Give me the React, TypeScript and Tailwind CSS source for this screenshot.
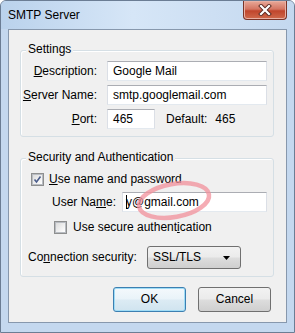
import React from 'react';

const font = { fontFamily: '"Liberation Sans", Arial, sans-serif' };

const btn =
  'h-[25px] w-[73px] rounded-[3px] border border-[#707070] bg-[linear-gradient(#f2f2f2,#ebebeb_48%,#dddddd_52%,#cfcfcf)] text-[12px] text-black';

const Checkbox = ({ checked }: { checked?: boolean }) => (
  <span className="flex h-[13px] w-[13px] shrink-0 items-center justify-center border border-[#8e8f8f] bg-white">
    <span className="flex h-[11px] w-[11px] items-center justify-center border border-[#b8bcc2] bg-[linear-gradient(135deg,#dcdcdc,#ffffff)]">
      {checked && (
        <svg width="9" height="9" viewBox="0 0 9 9">
          <path d="M1.5 4.5 L3.5 7 L7.5 1.5" fill="none" stroke="#4a5d8c" strokeWidth="1.6" />
        </svg>
      )}
    </span>
  </span>
);

const TextBox = ({ children, className = '' }: { children: React.ReactNode; className?: string }) => (
  <div
    className={`flex h-[20px] items-center border border-[#dbdfe6] border-t-[#abadb3] border-b-[#e3e9ef] bg-white pl-[5px] ${className}`}
  >
    {children}
  </div>
);

const Group = ({ title, children }: { title: string; children: React.ReactNode }) => (
  <div className="relative ml-[11px] mr-[12px] rounded-[3px] border border-[#d5dfe5] shadow-[inset_1px_1px_0_#ffffff]">
    <span className="absolute -top-[9px] left-[5px] bg-[#f0f0f0] px-[2px] leading-[15px]">{title}</span>
    {children}
  </div>
);

export default function App() {
  return (
    <div
      className="relative flex h-[333px] w-[295px] flex-col overflow-hidden rounded-t-[6px] border border-[#6b7d94] bg-[#c4d8ef] text-[12px] leading-[15px] text-black"
      style={font}
    >
      {/* Title bar */}
      <div className="flex h-[28px] shrink-0 justify-between bg-[linear-gradient(90deg,#bad2ec,#d6e6f7_45%,#c4d8ef)]">
        <span className="pl-[7px] pt-[7px] text-[12px]">SMTP Server</span>
        <div className="mr-[7px] flex h-[19px] w-[44px] items-center justify-center rounded-b-[4px] border border-t-0 border-[#7a3428] bg-[linear-gradient(#e9a999,#d47562_45%,#c0452c_55%,#cf6a4c)] shadow-[inset_0_0_0_1px_#e8b0a4]">
          <svg width="14" height="12" viewBox="0 0 14 12">
            <path d="M3 2 L11 10 M11 2 L3 10" stroke="#5b2a22" strokeWidth="4" strokeLinecap="square" />
            <path d="M3 2 L11 10 M11 2 L3 10" stroke="#ffffff" strokeWidth="2.2" strokeLinecap="square" />
          </svg>
        </div>
      </div>

      {/* Client area */}
      <div className="mx-[7px] mb-[9px] flex flex-1 flex-col border border-[#8798ad] bg-[#f0f0f0]">
        <div className="mt-[20px]">
          <Group title="Settings">
            <div className="flex flex-col gap-[4px] pb-[7px] pt-[10px]">
              <div className="flex h-[20px] items-center">
                <span className="w-[76px] text-right">
                  <u>D</u>escription:
                </span>
                <TextBox className="ml-[10px] w-[160px]">Google Mail</TextBox>
              </div>
              <div className="flex h-[20px] items-center">
                <span className="w-[76px] text-right">
                  <u>S</u>erver Name:
                </span>
                <TextBox className="ml-[10px] w-[160px]">smtp.googlemail.com</TextBox>
              </div>
              <div className="flex h-[20px] items-center">
                <span className="w-[76px] text-right">
                  <u>P</u>ort:
                </span>
                <TextBox className="ml-[10px] w-[48px]">465</TextBox>
                <span className="ml-[11px]">Default:</span>
                <span className="ml-[8px]">465</span>
              </div>
            </div>
          </Group>
        </div>

        <div className="mt-[21px]">
          <Group title="Security and Authentication">
            <div className="flex flex-col pb-[7px] pt-[12px]">
              <div className="flex h-[16px] items-center gap-[5px] pl-[10px]">
                <Checkbox checked />
                <span>
                  <u>U</u>se name and password
                </span>
              </div>
              <div className="mt-[5px] flex h-[20px] items-center pl-[31px]">
                <span className="w-[70px]">
                  User Na<u>m</u>e:
                </span>
                <TextBox className="w-[145px] !pl-[3px]">
                  <span className="h-[14px] w-px bg-black" />
                  <span className="-ml-px">y@gmail.com</span>
                </TextBox>
              </div>
              <div className="mt-[7px] flex h-[16px] items-center gap-[6px] pl-[33px]">
                <Checkbox />
                <span>
                  Use secure authent<u>i</u>cation
                </span>
              </div>
              <div className="mt-[11px] flex h-[23px] items-center gap-[10px] pl-[7px]">
                <span className="w-[109px]">
                  Co<u>n</u>nection security:
                </span>
                <div className="flex h-[23px] w-[94px] items-center justify-between rounded-[3px] border border-[#707070] bg-[linear-gradient(#f2f2f2,#ebebeb_48%,#dddddd_52%,#cfcfcf)] pl-[5px] pr-[10px]">
                  <span>SSL/TLS</span>
                  <svg width="7" height="4" viewBox="0 0 7 4">
                    <path d="M0 0 H7 L3.5 4 Z" fill="#000" />
                  </svg>
                </div>
              </div>
            </div>
          </Group>
        </div>

        <div className="mr-[15px] mt-[10px] flex justify-end gap-[12px]">
          <button
            className="h-[25px] w-[73px] rounded-[3px] border border-[#3c7fb1] bg-[linear-gradient(#f4f9fc,#e9f3f9_48%,#dcebf4_52%,#d0e4ef)] text-[12px] text-black shadow-[inset_0_0_0_1px_#9fdcf6]"
            style={font}
          >
            OK
          </button>
          <button className={btn} style={font}>
            Cancel
          </button>
        </div>
      </div>

      {/* Annotation ellipse */}
      <svg className="pointer-events-none absolute left-0 top-0" width="295" height="333">
        <ellipse
          cx="173"
          cy="199.5"
          rx="35.5"
          ry="16.5"
          fill="none"
          stroke="#f2909b"
          strokeOpacity="0.75"
          strokeWidth="4.5"
          transform="rotate(-10 173 199.5)"
        />
      </svg>
    </div>
  );
}
